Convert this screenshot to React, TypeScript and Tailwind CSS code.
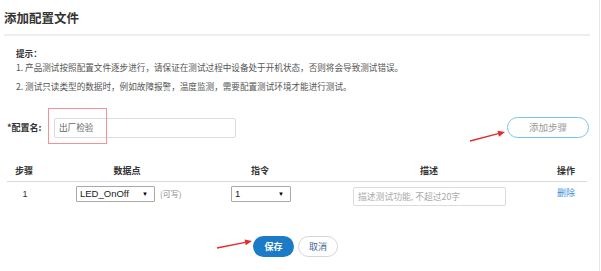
import React from "react";

const cjk = "font-['Microsoft_YaHei','Noto_Sans_CJK_SC',sans-serif]";

const Arrow = ({ x1, y1, x2, y2 }: { x1: number; y1: number; x2: number; y2: number }) => {
  const ang = Math.atan2(y2 - y1, x2 - x1);
  const len = 7;
  const w = 3;
  const bx = x2 - Math.cos(ang) * len;
  const by = y2 - Math.sin(ang) * len;
  const px = -Math.sin(ang) * w;
  const py = Math.cos(ang) * w;
  return (
    <g>
      <line x1={x1} y1={y1} x2={bx} y2={by} stroke="#e42a2a" strokeWidth={1.3} />
      <polygon points={`${x2},${y2} ${bx + px},${by + py} ${bx - px},${by - py}`} fill="#e42a2a" />
    </g>
  );
};

const FakeSelect = ({ value, width }: { value: string; width: string }) => (
  <div
    className={`${width} h-[16px] border border-[#a9a9a9] rounded-[1px] bg-white flex items-center justify-between pl-[3px] pr-[6px] font-['Liberation_Sans',sans-serif] text-[9.5px] text-[#222]`}
  >
    <span>{value}</span>
    <span className="text-[6px] text-black">▼</span>
  </div>
);

export default function App() {
  return (
    <div className={`relative w-[601px] h-[271px] bg-white overflow-hidden ${cjk}`}>
      <div className="w-[600px] h-full border-r border-[#e6e6e6]">
        {/* title */}
        <div className="pt-[9px] pl-[4px] h-[27px] leading-[18px] text-[12.5px] font-bold text-[#333]">添加配置文件</div>
        <div className="ml-[4px] mt-[7px] w-[586px] h-[2px] bg-[#eeeeee]" />

        {/* tips */}
        <div className="pl-[16px] text-[8.6px] leading-[12px] text-[#555]">
          <div className="mt-[11px] font-bold text-[#333]">提示：</div>
          <div className="mt-[2px]">1. 产品测试按照配置文件逐步进行，请保证在测试过程中设备处于开机状态，否则将会导致测试错误。</div>
          <div className="mt-[7px]">2. 测试只读类型的数据时，例如故障报警，温度监测，需要配置测试环境才能进行测试。</div>
        </div>

        {/* name row */}
        <div className="mt-[25px] flex items-center h-[21px]">
          <div className="pl-[7px] w-[54px] text-[9px] font-bold text-[#333]">*配置名:</div>
          <div className="w-[182px] h-[20px] border border-[#dcdcdc] rounded-[2px] flex items-center pl-[4px] text-[8.6px] text-[#666]">
            出厂检验
          </div>
          <div className="ml-[271px] w-[82px] h-[21px] rounded-full border border-[#7cc3ef] flex items-center justify-center text-[9.5px] text-[#999]">
            添加步骤
          </div>
        </div>

        {/* table */}
        <div className="mt-[22px] ml-[7px] w-[580px]">
          <div className="grid grid-cols-[34px_172px_94px_244px_30px] h-[22px] items-center border-b border-[#d9d9d9] text-[9px] font-bold text-[#333] text-center">
            <div>步骤</div>
            <div>数据点</div>
            <div>指令</div>
            <div>描述</div>
            <div>操作</div>
          </div>
          <div className="grid grid-cols-[34px_172px_94px_244px_30px] pt-[4px] items-start text-[9px]">
            <div className="text-center leading-[16px] text-[#333] font-['Liberation_Sans',sans-serif] pl-[2px]">1</div>
            <div className="pl-[35px] flex items-center gap-[5px]">
              <FakeSelect value="LED_OnOff" width="w-[79px]" />
              <span className="text-[8px] text-[#888]">(可写)</span>
            </div>
            <div className="pl-[18px]">
              <FakeSelect value="1" width="w-[60px]" />
            </div>
            <div className="pl-[46px] pt-[1px]">
              <div className="w-[153px] h-[19px] border border-[#dcdcdc] rounded-[2px] flex items-center pl-[4px] text-[8.8px] text-[#aaa]">
                描述测试功能, 不超过20字
              </div>
            </div>
            <div className="text-center leading-[14px] text-[#3b8fdb]">删除</div>
          </div>
        </div>

        {/* buttons */}
        <div className="mt-[30px] pl-[253px] flex gap-[4px]">
          <div className="w-[41px] h-[21px] rounded-full bg-[#1b7bc6] text-white text-[9px] font-bold flex items-center justify-center">
            保存
          </div>
          <div className="w-[40px] h-[21px] rounded-full border border-[#d6d6d6] text-[#3f6892] text-[9px] flex items-center justify-center">
            取消
          </div>
        </div>
      </div>

      {/* annotations */}
      <div className="absolute left-[48px] top-[108px] w-[59px] h-[36px] border border-[#f39393]" />
      <svg className="absolute left-0 top-0 pointer-events-none" width={601} height={271}>
        <Arrow x1={470} y1={141} x2={505} y2={132} />
        <Arrow x1={217} y1={248} x2={252} y2={241} />
      </svg>
    </div>
  );
}
